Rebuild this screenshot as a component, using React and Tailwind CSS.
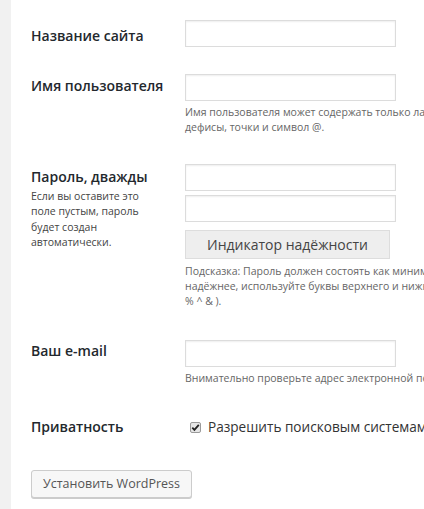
import React from 'react';

const labelCls = "w-[154px] shrink-0 text-[14px] leading-5 font-semibold text-[#23282d]";
const inputCls = "block w-[211px] h-[27px] border border-[#dcdcdc] bg-white shadow-[inset_0_1px_2px_rgba(0,0,0,0.07)]";
const helpCls = "text-[10.5px] leading-[15px] text-[#666] whitespace-nowrap";

const App = () => {
    return (
        <div className="w-[424px] h-[509px] overflow-hidden flex bg-white font-['Open_Sans',sans-serif]">
            {/* серая полоса слева */}
            <div className="w-[11px] shrink-0 bg-[#f1f1f1]"></div>
            <div className="flex-1 pl-5 pt-5 flex flex-col">
                {/* название сайта */}
                <div className="flex">
                    <div className={labelCls + " mt-[6px]"}>Название сайта</div>
                    <div>
                        <input className={inputCls} type="text" />
                    </div>
                </div>

                {/* имя пользователя */}
                <div className="flex mt-[27px]">
                    <div className={labelCls + " mt-[2px]"}>Имя пользователя</div>
                    <div>
                        <input className={inputCls} type="text" />
                        <p className={helpCls + " mt-[4px]"}>
                            Имя пользователя может содержать только латинские буквы, цифры, пробелы, подчёркивания,<br />
                            дефисы, точки и символ @.
                        </p>
                    </div>
                </div>

                {/* пароль */}
                <div className="flex mt-[29px]">
                    <div className="w-[154px] shrink-0 mt-[3px]">
                        <div className="text-[14px] leading-5 font-semibold text-[#23282d]">Пароль, дважды</div>
                        <p className="mt-[2px] w-[130px] text-[10.5px] leading-[15.3px] text-[#444]">
                            Если вы оставите это поле пустым, пароль будет создан автоматически.
                        </p>
                    </div>
                    <div>
                        <input className={inputCls} type="password" />
                        <input className={inputCls + " mt-[4px]"} type="password" />
                        <div className="mt-[8px] w-[205px] h-[29px] bg-[#eee] border border-[#ddd] flex items-center justify-center text-[14px] text-[#444]">
                            Индикатор надёжности
                        </div>
                        <p className={helpCls + " mt-[5px] leading-[14.5px]"}>
                            Подсказка: Пароль должен состоять как минимум из семи символов. Чтобы сделать его<br />
                            надёжнее, используйте буквы верхнего и нижнего регистра, числа и символы наподобие ! " ? $<br />
                            % ^ &amp; ).
                        </p>
                    </div>
                </div>

                {/* e-mail */}
                <div className="flex mt-[31px]">
                    <div className={labelCls + " mt-[1px]"}>Ваш e-mail</div>
                    <div>
                        <input className={inputCls + " h-[26px]"} type="email" />
                        <p className={helpCls + " mt-[4px]"}>
                            Внимательно проверьте адрес электронной почты, перед тем как продолжить.
                        </p>
                    </div>
                </div>

                {/* приватность */}
                <div className="flex mt-[31px]">
                    <div className={labelCls}>Приватность</div>
                    <div className="flex items-center h-5 pl-[5px] whitespace-nowrap">
                        <svg width="11" height="11" viewBox="0 0 11 11" className="shrink-0">
                            <rect x="0.5" y="0.5" width="10" height="10" rx="1.5" fill="#e6e6e6" stroke="#9a9a9a" />
                            <path d="M2.3 5.6 L4.4 7.8 L8.8 2.8" fill="none" stroke="#222" strokeWidth="1.8" />
                        </svg>
                        <span className="ml-[7px] text-[13.6px] text-[#333]">Разрешить поисковым системам индексировать сайт</span>
                    </div>
                </div>

                {/* кнопка */}
                <div className="mt-[33px]">
                    <button className="h-[28px] px-[11px] bg-[#f7f7f7] border border-[#ccc] rounded-[3px] shadow-[0_1px_0_#ccc] text-[12.5px] text-[#555]">
                        Установить WordPress
                    </button>
                </div>
            </div>
        </div>
    );
}

export default App;
